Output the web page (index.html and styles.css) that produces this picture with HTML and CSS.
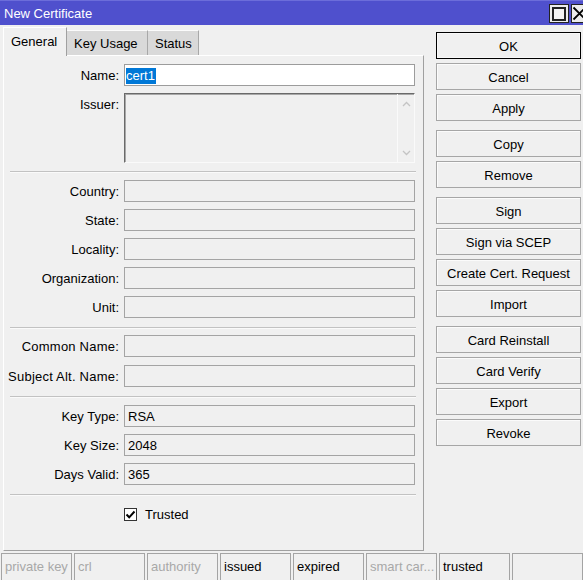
FILE: index.html
```html
<!DOCTYPE html>
<html>
<head>
<meta charset="utf-8">
<title>New Certificate</title>
<link rel="stylesheet" href="styles.css">
</head>
<body>
<div class="titlebar">
  <div class="title">New Certificate</div>
  <div class="winbtns">
    <div class="winbtn"><span class="maxsq"></span></div>
    <div class="winbtn close">
      <svg width="15" height="15" viewBox="0 0 15 15"><path d="M1.5 1.5 L13.5 13.5 M13.5 1.5 L1.5 13.5" stroke="#000" stroke-width="1.8" fill="none"/></svg>
    </div>
  </div>
</div>
<div class="main">
  <div class="left">
    <div class="tabs">
      <div class="tab active">General</div>
      <div class="tab tab-ku">Key Usage</div>
      <div class="tab tab-st">Status</div>
    </div>
    <div class="panel">
      <div class="form">
        <div class="lbl">Name:</div>
        <div class="inp white name"><span class="sel">cert1</span></div>
        <div class="lbl">Issuer:</div>
        <div class="textbox">
          <div class="tb-area"></div>
          <div class="tb-scroll">
            <svg width="9" height="6" viewBox="0 0 9 6"><path d="M1 5 L4.5 1.5 L8 5" stroke="#c4c4c4" stroke-width="1.3" fill="none"/></svg>
            <svg width="9" height="6" viewBox="0 0 9 6"><path d="M1 1 L4.5 4.5 L8 1" stroke="#c4c4c4" stroke-width="1.3" fill="none"/></svg>
          </div>
        </div>
      </div>
      <div class="sep s1"></div>
      <div class="form">
        <div class="lbl">Country:</div><div class="inp"></div>
        <div class="lbl">State:</div><div class="inp"></div>
        <div class="lbl">Locality:</div><div class="inp"></div>
        <div class="lbl">Organization:</div><div class="inp"></div>
        <div class="lbl">Unit:</div><div class="inp"></div>
      </div>
      <div class="sep s2"></div>
      <div class="form gap8">
        <div class="lbl wide">Common Name:</div><div class="inp"></div>
        <div class="lbl wide">Subject Alt. Name:</div><div class="inp"></div>
      </div>
      <div class="sep s3"></div>
      <div class="form">
        <div class="lbl">Key Type:</div><div class="inp">RSA</div>
        <div class="lbl">Key Size:</div><div class="inp">2048</div>
        <div class="lbl">Days Valid:</div><div class="inp">365</div>
      </div>
      <div class="sep s4"></div>
      <div class="form">
        <div></div>
        <div class="check">
          <span class="cbox">
            <svg width="11" height="11" viewBox="0 0 11 11"><path d="M1.5 5.5 L4.2 8.3 L9.5 2.5" stroke="#000" stroke-width="2" fill="none"/></svg>
          </span>
          <span>Trusted</span>
        </div>
      </div>
    </div>
  </div>
  <div class="right">
    <div class="group">
      <div class="btn ok">OK</div>
      <div class="btn">Cancel</div>
      <div class="btn">Apply</div>
    </div>
    <div class="group">
      <div class="btn">Copy</div>
      <div class="btn">Remove</div>
    </div>
    <div class="group">
      <div class="btn">Sign</div>
      <div class="btn">Sign via SCEP</div>
      <div class="btn">Create Cert. Request</div>
      <div class="btn">Import</div>
    </div>
    <div class="group">
      <div class="btn">Card Reinstall</div>
      <div class="btn">Card Verify</div>
      <div class="btn">Export</div>
      <div class="btn">Revoke</div>
    </div>
  </div>
</div>
<div class="statusbar">
  <div class="cell dis">private key</div>
  <div class="cell dis">crl</div>
  <div class="cell dis">authority</div>
  <div class="cell">issued</div>
  <div class="cell">expired</div>
  <div class="cell dis">smart car...</div>
  <div class="cell">trusted</div>
  <div class="cell last"></div>
</div>
</body>
</html>
```

FILE: styles.css
```css
* { box-sizing: border-box; }
html, body { margin: 0; padding: 0; }
body {
  width: 583px;
  height: 580px;
  overflow: hidden;
  background: #f0f0f0;
  font-family: "Liberation Sans", Arial, sans-serif;
  font-size: 13px;
  color: #000;
}

.titlebar {
  height: 25px;
  background: #4f50cd;
  border-top: 1px solid #6c6dda;
  color: #fff;
  display: flex;
  padding-left: 4px;
  overflow: hidden;
}
.title { flex: 1; line-height: 26px; }
.winbtns { display: flex; gap: 2px; margin-top: 3px; margin-right: -8px; flex: none; }
.winbtn {
  width: 20px;
  height: 19px;
  background: #ececec;
  border: 1px solid #222;
  display: flex;
  align-items: center;
  justify-content: center;
}
.winbtn.close { justify-content: flex-start; padding-left: 0; }
.maxsq {
  width: 14px;
  height: 14px;
  border: 2px solid #222;
  background: #f4f4f4;
}

.main { display: flex; height: 528px; }
.left { width: 421px; margin-left: 3px; display: flex; flex-direction: column; }

.tabs { display: flex; height: 28px; margin-top: 2px; align-items: flex-start; }
.tab {
  height: 25px;
  margin-top: 3px;
  padding-left: 7px;
  line-height: 25px;
  background: #d9d9d9;
  border-top: 1px solid #fbfbfb;
  border-right: 1px solid #a8a8a8;
}
.tab.active {
  width: 64px;
  height: 29px;
  margin-top: 0;
  margin-bottom: -1px;
  background: #f0f0f0;
  border-left: 1px solid #fff;
  border-top: 1px solid #fff;
  border-right: 1px solid #a0a0a0;
  line-height: 28px;
  position: relative;
  z-index: 1;
}
.tab-ku { width: 81px; }
.tab-st { width: 51px; }

.panel {
  height: 496px;
  border-top: 1px solid #fff;
  border-left: 1px solid #fff;
  border-right: 1px solid #a0a0a0;
  border-bottom: 1px solid #a0a0a0;
  padding-top: 8px;
}

.form {
  display: grid;
  grid-template-columns: 115px 291px;
  column-gap: 5px;
  row-gap: 7px;
}
.form.gap8 { row-gap: 8px; }
.lbl { text-align: right; line-height: 24px; height: 22px; white-space: nowrap; }
.lbl.wide { letter-spacing: 0.22px; }
.inp {
  height: 22px;
  border: 1px solid #a4a4a4;
  background: #f0f0f0;
  padding-left: 3px;
  line-height: 22px;
}
.inp.white { background: #fff; border-color: #9c9c9c; }
.inp.name { padding-left: 1px; padding-top: 1px; display: flex; align-items: center; }
.sel {
  background: #0078d7;
  color: #fff;
  line-height: 16px;
  height: 16px;
  padding-right: 1px;
}

.textbox {
  height: 70px;
  display: flex;
  border: 1px solid;
  border-color: #6a6a6a #fafafa #fafafa #6a6a6a;
  box-shadow: inset 1px 1px 0 #a8a8a8;
}
.tb-area { flex: 1; }
.tb-scroll {
  width: 17px;
  border-left: 1px solid #fafafa;
  display: flex;
  flex-direction: column;
  justify-content: space-between;
  align-items: center;
  padding: 7px 0 6px;
}

.sep {
  height: 1px;
  background: #c2c2c2;
  box-shadow: 0 1px 0 #fafafa;
  margin-left: 6px;
  margin-right: 7px;
}
.s1 { margin-top: 8px; margin-bottom: 8px; }
.s2 { margin-top: 9px; margin-bottom: 7px; }
.s3 { margin-top: 9px; margin-bottom: 8px; }
.s4 { margin-top: 9px; margin-bottom: 12px; }

.check { display: flex; align-items: center; gap: 8px; height: 14px; }
.check span:last-child { padding-top: 1px; }
.cbox {
  width: 13px;
  height: 13px;
  border: 1px solid #333;
  background: #fff;
  display: flex;
  align-items: center;
  justify-content: center;
}

.right {
  margin-left: 12px;
  width: 145px;
  padding-top: 7px;
  display: flex;
  flex-direction: column;
  gap: 9px;
}
.group { display: flex; flex-direction: column; gap: 4px; }
.btn {
  height: 27px;
  border: 1px solid #a6a6a6;
  box-shadow: inset 1px 1px 0 #fbfbfb;
  background: #f0f0f0;
  text-align: center;
  line-height: 27px;
  white-space: nowrap;
}
.btn.ok { border-color: #000; box-shadow: inset 0 0 0 1px #f8f8f8; }

.statusbar {
  display: flex;
  gap: 2px;
  padding-left: 1px;
  height: 27px;
}
.cell {
  width: 71px;
  flex: none;
  border: 1px solid #a4a4a4;
  border-bottom: none;
  padding-left: 3px;
  line-height: 25px;
  white-space: nowrap;
  overflow: hidden;
}
.cell.dis { color: #a8a8a8; }
```
